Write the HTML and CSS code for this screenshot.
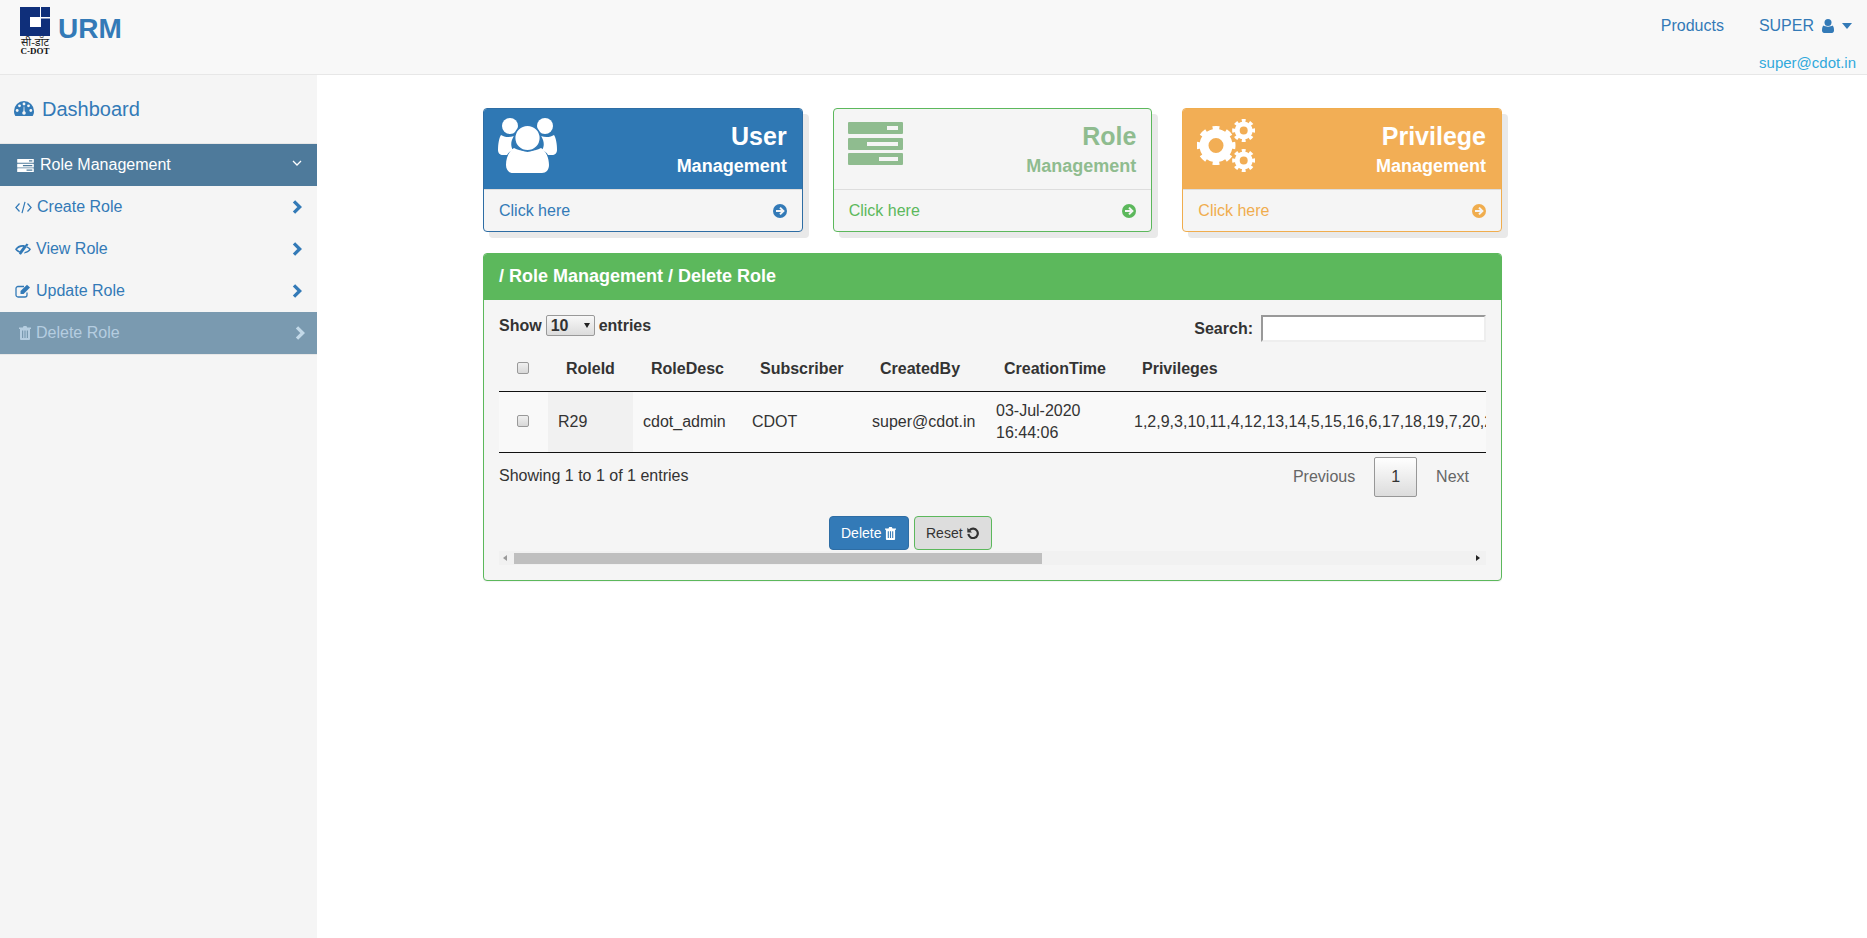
FILE: index.html
```html
<!DOCTYPE html>
<html lang="en">
<head>
<meta charset="utf-8">
<title>URM</title>
<link rel="stylesheet" href="styles.css">
</head>
<body>
<svg class="defs" width="0" height="0" aria-hidden="true">
  <symbol id="i-server" viewBox="0 0 55 43">
    <path fill-rule="evenodd" d="M1 0h53a1 1 0 0 1 1 1v10a1 1 0 0 1-1 1H1a1 1 0 0 1-1-1V1a1 1 0 0 1 1-1zM39 4v4h11V4zM1 16h53a1 1 0 0 1 1 1v10a1 1 0 0 1-1 1H1a1 1 0 0 1-1-1V17a1 1 0 0 1 1-1zM19 20v4h31v-4zM1 31h53a1 1 0 0 1 1 1v10a1 1 0 0 1-1 1H1a1 1 0 0 1-1-1V32a1 1 0 0 1 1-1zM31 35v4h19v-4z"/>
  </symbol>
  <symbol id="i-chev" viewBox="0 0 10 14">
    <path d="M2 1.300 7.700 7 2 12.700" fill="none" stroke="currentColor" stroke-width="3.300"/>
  </symbol>
  <symbol id="i-trash" viewBox="0 0 12 14">
    <path fill="currentColor" fill-rule="evenodd" d="M3.800 1.600 4.600 0h2.800l.8 1.600H12V3h-1v10a1 1 0 0 1-1 1H2a1 1 0 0 1-1-1V3H0V1.600zM3 4.500V12h1.200V4.500zm2.400 0V12h1.200V4.500zm2.400 0V12H9V4.500z"/>
  </symbol>
  <symbol id="i-go" viewBox="0 0 14 14">
    <circle cx="7" cy="7" r="7" fill="currentColor"/>
    <path d="M3 7h7M7 3.600 10.400 7 7 10.400" fill="none" stroke="#f5f5f5" stroke-width="2"/>
  </symbol>
</svg>

<header class="navbar">
  <a class="brand">
    <span class="logo">
      <svg class="logo-mark" viewBox="0 0 30 29">
        <rect width="30" height="29" fill="#0f2f7a"/>
        <path fill="#fff" d="M10 10h10V0h1v10h9v1.500H21V20H10z"/>
        <rect x="15" y="10" width="5" height="5" fill="#fff"/>
      </svg>
      <span class="logo-hi">सी-डॉट</span>
      <span class="logo-en">C-DOT</span>
    </span>
    <span class="brand-name">URM</span>
  </a>
  <nav class="usernav">
    <div class="usernav-links">
      <a>Products</a>
      <a class="user-menu">SUPER
        <svg class="user-icon" viewBox="0 0 12 14"><circle cx="6" cy="3.500" r="3.500" fill="#337ab7"/><path fill="#337ab7" d="M1.500 6.500C3 8 9 8 10.500 6.500 11.500 7 12 9 12 11.500 12 13 11 14 10 14H2C1 14 0 13 0 11.500 0 9 .5 7 1.500 6.500z"/></svg>
        <span class="caret"></span>
      </a>
    </div>
    <div class="user-email">super@cdot.in</div>
  </nav>
</header>

<div class="layout">
  <aside class="sidebar">
    <a class="dash">
      <svg class="dash-icon" viewBox="0 0 20 15"><path fill="#337ab7" d="M0 10a10 10 0 0 1 20 0c0 2-.4 3.500-1.300 5H1.300C.4 13.500 0 12 0 10z"/><g fill="#f5f5f5"><circle cx="3.200" cy="9.500" r="1.400"/><circle cx="5.500" cy="4.800" r="1.400"/><circle cx="10" cy="3" r="1.400"/><circle cx="14.500" cy="4.800" r="1.400"/><circle cx="16.800" cy="9.500" r="1.400"/><circle cx="10" cy="12" r="1.800"/><path d="M9.300 12 9.700 5.500h.6l.4 6.500z"/></g></svg>
      Dashboard
    </a>
    <div class="menu-head">
      <svg class="mi-server"><use href="#i-server"/></svg>
      Role Management
      <svg class="angle" viewBox="0 0 10 6"><path d="M1 1l4 4 4-4" fill="none" stroke="currentColor" stroke-width="1.300"/></svg>
    </div>
    <a class="menu-item">
      <svg class="mi-code" viewBox="0 0 17 13"><path d="M4.500 2.500.9 6.500l3.600 4M12.500 2.500l3.600 4-3.600 4M10 .8 7 12.200" fill="none" stroke="currentColor" stroke-width="1.200"/></svg>
      Create Role
      <svg class="chev"><use href="#i-chev"/></svg>
    </a>
    <a class="menu-item">
      <svg class="mi-eye" viewBox="0 0 16 12"><path fill="currentColor" fill-rule="evenodd" d="M0 6.300C1.800 3.500 4.500 2 7.500 2c.9 0 1.700.1 2.500.4L11.500.5l2 1-7.600 10.200-2-1 .7-1C2.900 9.200 1.200 8 0 6.300zm4.800-1.900C3.700 4.800 2.800 5.500 2 6.300c.8.800 1.700 1.400 2.800 1.900L8 3.900C6.900 3.800 5.800 4 4.800 4.400zM11.600 3.200c1.800.7 3.300 1.600 4.400 3.100-1.500 2.400-4.100 4-7.200 4.100l1-1.400c1.800-.4 3.300-1.300 4.400-2.700-.8-.9-1.700-1.500-3-2.100z"/></svg>
      View Role
      <svg class="chev"><use href="#i-chev"/></svg>
    </a>
    <a class="menu-item">
      <svg class="mi-edit" viewBox="0 0 16 14"><path d="M12 8.500V11a2 2 0 0 1-2 2H3a2 2 0 0 1-2-2V4.500a2 2 0 0 1 2-2h6" fill="none" stroke="currentColor" stroke-width="1.300"/><path fill="currentColor" d="M5.500 7 12 .8l3 2.800L8.600 10H5.500z"/></svg>
      Update Role
      <svg class="chev"><use href="#i-chev"/></svg>
    </a>
    <a class="menu-item active">
      <svg class="mi-trash"><use href="#i-trash"/></svg>
      Delete Role
      <svg class="chev"><use href="#i-chev"/></svg>
    </a>
  </aside>

  <main class="main">
    <section class="cards">
      <article class="card card-blue">
        <div class="card-head">
          <svg class="ci-users" viewBox="0 0 59 55">
            <circle cx="12" cy="8" r="8" fill="#fff"/>
            <circle cx="47" cy="8" r="8" fill="#fff"/>
            <path fill="#fff" d="M3 17c3 2 8 3 13 1-4 6-3 11-1 14-3 1-5 3-6 5H5c-3 0-5-2-5-5 0-6 1-12 3-15zM56 17c-3 2-8 3-13 1 4 6 3 11 1 14 3 1 5 3 6 5h4c3 0 5-2 5-5 0-6-1-12-3-15z"/>
            <path fill="#fff" d="M16 30c6 4 21 4 27 0 5 3 8 10 8 17 0 5-3 8-7 8H15c-4 0-7-3-7-8 0-7 3-14 8-17z"/>
            <circle cx="29.500" cy="20" r="13" fill="#fff" stroke="#337ab7" stroke-width="1.800"/>
          </svg>
          <div class="card-title"><b>User</b><span>Management</span></div>
        </div>
        <a class="card-foot">Click here<svg class="go"><use href="#i-go"/></svg></a>
      </article>
      <article class="card card-green">
        <div class="card-head">
          <svg class="ci-server"><use href="#i-server"/></svg>
          <div class="card-title"><b>Role</b><span>Management</span></div>
        </div>
        <a class="card-foot">Click here<svg class="go"><use href="#i-go"/></svg></a>
      </article>
      <article class="card card-orange">
        <div class="card-head">
          <svg class="ci-cogs" viewBox="0 0 58 53">
            <g fill="none" stroke="#fff">
              <circle cx="19" cy="26.500" r="12" stroke-width="9"/>
              <circle cx="19" cy="26.500" r="17" stroke-width="5" pathLength="16" stroke-dasharray="1 1" stroke-dashoffset=".5"/>
              <circle cx="46.700" cy="11.500" r="6.500" stroke-width="5"/>
              <circle cx="46.700" cy="11.500" r="9.800" stroke-width="3.500" pathLength="16" stroke-dasharray="1 1" stroke-dashoffset=".5"/>
              <circle cx="46.700" cy="41.500" r="6.500" stroke-width="5"/>
              <circle cx="46.700" cy="41.500" r="9.800" stroke-width="3.500" pathLength="16" stroke-dasharray="1 1" stroke-dashoffset=".5"/>
            </g>
          </svg>
          <div class="card-title"><b>Privilege</b><span>Management</span></div>
        </div>
        <a class="card-foot">Click here<svg class="go"><use href="#i-go"/></svg></a>
      </article>
    </section>

    <section class="panel">
      <h2 class="panel-head">/ Role Management / Delete Role</h2>
      <div class="panel-body">
        <div class="toolbar">
          <label class="show">Show
            <span class="select-wrap"><select class="select"><option>10</option><option>25</option></select></span>
            entries</label>
          <label class="search">Search:<input class="search-input" type="text"></label>
        </div>
        <div class="table-clip">
          <table class="grid">
            <thead>
              <tr>
                <th class="c-check"><input class="check" type="checkbox"></th>
                <th class="c-id">RoleId</th>
                <th class="c-desc">RoleDesc</th>
                <th class="c-sub">Subscriber</th>
                <th class="c-by">CreatedBy</th>
                <th class="c-time">CreationTime</th>
                <th class="c-priv">Privileges</th>
              </tr>
            </thead>
            <tbody>
              <tr>
                <td class="c-check"><input class="check" type="checkbox"></td>
                <td class="sorted">R29</td>
                <td>cdot_admin</td>
                <td>CDOT</td>
                <td>super@cdot.in</td>
                <td>03-Jul-2020<br>16:44:06</td>
                <td>1,2,9,3,10,11,4,12,13,14,5,15,16,6,17,18,19,7,20,21,8,22,23</td>
              </tr>
            </tbody>
          </table>
        </div>
        <div class="table-foot">
          <div class="info">Showing 1 to 1 of 1 entries</div>
          <div class="pager">
            <a class="page">Previous</a>
            <a class="page current">1</a>
            <a class="page">Next</a>
          </div>
        </div>
        <div class="actions">
          <button class="btn btn-delete" type="button">Delete <svg class="bi-trash"><use href="#i-trash"/></svg></button>
          <button class="btn btn-reset" type="button">Reset <svg class="bi-undo" viewBox="0 0 12 12"><path d="M2.600 3.200A4.700 4.700 0 1 1 1.400 6.800" fill="none" stroke="currentColor" stroke-width="2.200"/><path fill="currentColor" d="M.3.800 5 5.400H.3z"/></svg></button>
        </div>
        <div class="hscroll">
          <span class="arrow arrow-left"></span>
          <span class="thumb"></span>
          <span class="arrow arrow-right"></span>
        </div>
      </div>
    </section>
  </main>
</div>
</body>
</html>
```

FILE: styles.css
```css
* { box-sizing: border-box; }
html, body { height: 100%; }
body {
  margin: 0;
  font-family: "Liberation Sans", Arial, sans-serif;
  font-size: 16px;
  color: #333;
  background: #fff;
  display: flex;
  flex-direction: column;
  overflow: hidden;
}
a { color: #337ab7; text-decoration: none; }
.defs { position: absolute; }

/* top bar */
.navbar {
  height: 75px;
  flex: none;
  display: flex;
  justify-content: space-between;
  background: #f8f8f8;
  border-bottom: 1px solid #e7e7e7;
}
.brand { display: flex; align-items: flex-start; padding: 7px 0 0 20px; }
.logo { width: 30px; display: flex; flex-direction: column; align-items: center; }
.logo-mark { width: 30px; height: 29px; display: block; }
.logo-hi { font-family: "Liberation Serif", "Noto Sans", serif; font-size: 11px; line-height: 10px; margin-top: 1px; color: #222; white-space: nowrap; }
.logo-en { font-family: "Liberation Serif", serif; font-weight: bold; font-size: 9px; line-height: 9px; color: #111; white-space: nowrap; }
.brand-name { font-size: 28px; font-weight: bold; line-height: 44px; margin-left: 8px; color: #337ab7; }
.usernav { display: flex; flex-direction: column; align-items: flex-end; padding: 16px 11px 0 0; }
.usernav-links { display: flex; gap: 35px; line-height: 20px; padding-right: 4px; }
.user-menu { display: flex; align-items: center; }
.user-icon { width: 12px; height: 14px; margin-left: 8px; }
.caret { width: 0; height: 0; margin-left: 8px; border: 5px solid transparent; border-top: 6px solid #337ab7; border-bottom: 0; }
.user-email { font-size: 15px; line-height: 20px; margin-top: 17px; color: #31a9dc; }

/* layout */
.layout { flex: 1; display: flex; min-height: 0; }
.sidebar { width: 317px; flex: none; background: #f5f5f5; }
.dash { display: flex; align-items: center; gap: 8px; font-size: 20px; line-height: 24px; padding: 23px 0 25px 14px; height: 69px; }
.dash-icon { width: 20px; height: 15px; }
.menu-head, .menu-item { height: 42px; display: flex; align-items: center; }
.menu-head { background: #4e7a9b; color: #fff; padding-left: 17px; box-shadow: 0 -1px 0 #e7e7e7; }
.mi-server { width: 17px; height: 13px; fill: #fff; margin-right: 6px; }
.angle { width: 10px; height: 6px; margin: -4px 0 0 auto; margin-right: 15px; color: #fff; }
.menu-item { padding-left: 15px; }
.mi-code { width: 17px; height: 13px; margin-right: 5px; }
.mi-eye { width: 16px; height: 12px; margin-right: 5px; }
.mi-edit { width: 16px; height: 14px; margin-right: 5px; }
.chev { width: 10px; height: 14px; margin-left: auto; margin-right: 15px; color: #337ab7; }
.active { background: #7a9ab0; color: #b5cde0; padding-left: 19px; box-shadow: 0 1px 0 #e7e7e7; }
.active .chev { color: #c3d9e8; margin-right: 12px; }
.mi-trash { width: 12px; height: 14px; margin-right: 5px; }

/* main */
.main { flex: 1; padding: 33px 0 0 166px; }
.cards { width: 1019px; display: grid; grid-template-columns: repeat(3, 1fr); gap: 30px; margin-bottom: 21px; }
.card { height: 124px; border: 1px solid; border-radius: 4px; background: #f5f5f5; box-shadow: 6px 6px 0 #e9e9e9; }
.card-head { height: 81px; padding: 0 15px 0 14px; display: flex; justify-content: space-between; border-bottom: 1px solid #ddd; border-radius: 3px 3px 0 0; }
.card-title { display: flex; flex-direction: column; align-items: flex-end; padding-top: 12px; font-weight: bold; }
.card-title b { font-size: 25px; line-height: 30px; }
.card-title span { font-size: 18px; line-height: 22px; margin-top: 4px; }
.card-foot { height: 41px; padding: 0 15px; display: flex; align-items: center; justify-content: space-between; }
.go { width: 14px; height: 14px; }
.card-blue { border-color: #2e6da4; }
.card-blue .card-head { background: #2f78b4; color: #fff; }
.card-blue .card-foot { color: #337ab7; }
.card-green { border-color: #5cb85c; }
.card-green .card-head { color: #8fbc8f; }
.card-green .card-foot { color: #5cb85c; }
.card-orange { border-color: #f0ad4e; }
.card-orange .card-head { background: #f2ae55; color: #fff; }
.card-orange .card-foot { color: #f0ad4e; }
.ci-users { width: 59px; height: 55px; margin-top: 9px; }
.ci-server { width: 55px; height: 43px; margin-top: 13px; fill: #8fbc8f; }
.ci-cogs { width: 58px; height: 53px; margin-top: 10px; }

/* panel */
.panel { width: 1019px; height: 328px; border: 1px solid #5cb85c; border-radius: 4px; background: #f5f5f5; box-shadow: 0 1px 1px rgba(0,0,0,.05); }
.panel-head { margin: 0; height: 46px; padding: 0 15px; background: #5cb85c; color: #fff; font-size: 18px; line-height: 45px; font-weight: bold; border-radius: 3px 3px 0 0; }
.panel-body { padding: 15px 15px 0; }
.toolbar { height: 31px; display: flex; justify-content: space-between; align-items: flex-start; font-weight: bold; }
.show { display: flex; align-items: center; height: 21px; }
.select-wrap { position: relative; display: block; width: 49px; height: 21px; margin: 0 4px; }
.select-wrap::after { content: ""; position: absolute; right: 5px; top: 8px; border: 3px solid transparent; border-top: 5px solid #222; border-bottom: 0; }
.select { appearance: none; display: block; width: 49px; height: 21px; padding: 0 0 0 4px; border: 1px solid #999; border-radius: 2px; background: linear-gradient(#f8f8f8, #dcdcdc); font: bold 16px "Liberation Sans", Arial, sans-serif; color: #333; }
.search { display: flex; align-items: center; gap: 8px; }
.search-input { width: 225px; height: 27px; background: #fff; border: 2px solid; border-color: #999 #eee #eee #999; padding: 1px 2px; outline: 0; }
.table-clip { width: 987px; overflow: hidden; }
.grid { table-layout: fixed; width: 1800px; border-collapse: separate; border-spacing: 0; }
.grid th { height: 46px; padding: 0 0 0 18px; text-align: left; font-weight: bold; border-bottom: 1px solid #111; white-space: nowrap; }
.grid td { height: 61px; padding: 0 0 0 10px; line-height: 22px; background: #f9f9f9; border-bottom: 1px solid #111; white-space: nowrap; }
.grid .sorted { background: #f1f1f1; }
.grid .c-check { padding: 0 0 0 18px; width: 49px; }
.c-id { width: 85px; }
.c-desc { width: 109px; }
.c-sub { width: 120px; }
.c-by { width: 124px; }
.c-time { width: 138px; }
.c-priv { width: 1175px; }
.check { appearance: none; display: block; width: 12px; height: 12px; margin: -2px 0 0; border: 1px solid #999; border-radius: 2px; background: linear-gradient(#f0f0f0, #d8d8d8); }
.table-foot { height: 63px; display: flex; justify-content: space-between; align-items: flex-start; }
.info { margin-top: 12px; line-height: 22px; }
.pager { display: flex; margin-top: 4px; }
.page { height: 40px; padding: 8px 16px; margin-left: 2px; line-height: 22px; border: 1px solid transparent; border-radius: 2px; color: #666; }
.page.current { color: #333; border-color: #979797; background: linear-gradient(#fff, #dcdcdc); }
.actions { display: flex; gap: 5px; height: 34px; margin-left: 330px; }
.btn { height: 34px; padding: 0 11px; border: 1px solid; border-radius: 4px; font: 14px "Liberation Sans", Arial, sans-serif; display: flex; align-items: center; gap: 4px; }
.btn-delete { width: 80px; background: #337ab7; border-color: #2e6da4; color: #fff; }
.btn-reset { width: 78px; background: #ddd; border-color: #5cb85c; color: #333; }
.bi-trash { width: 11px; height: 13px; }
.bi-undo { width: 12px; height: 12px; }
.hscroll { position: relative; height: 14px; margin-top: 1px; background: #f1f1f1; display: flex; align-items: center; }
.thumb { position: absolute; left: 15px; top: 2px; width: 528px; height: 11px; background: #bfbfbf; }
.arrow { position: absolute; top: 4px; border: 3px solid transparent; }
.arrow-left { left: 4px; border-right: 4px solid #9a9a9a; border-left: 0; }
.arrow-right { right: 6px; border-left: 4px solid #222; border-right: 0; }
```
